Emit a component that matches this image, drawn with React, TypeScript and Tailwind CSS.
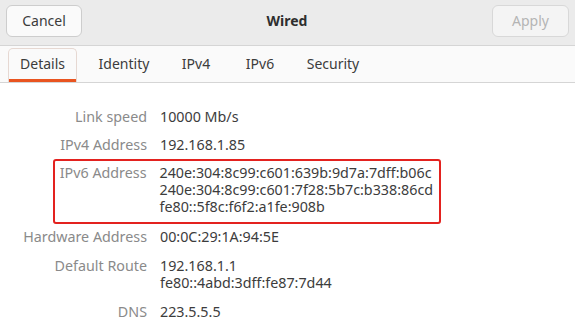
import React from 'react';

const tabs = [
  { name: 'Details', w: 'w-[69px]' },
  { name: 'Identity', w: 'w-[94px]' },
  { name: 'IPv4', w: 'w-[50px]' },
  { name: 'IPv6', w: 'w-[78px]' },
  { name: 'Security', w: 'w-[68px]' },
];

const Row: React.FC<{ label: string; values: string[]; className?: string }> = ({ label, values, className }) => (
  <div className={`flex items-start ${className ?? ''}`}>
    <div className="w-[160px] shrink-0 pr-[13px] text-right text-[#8a8a8a] leading-[17px] whitespace-nowrap">{label}</div>
    <div className="text-[#3c3c3c] leading-[17px] whitespace-nowrap">
      {values.map(v => (
        <div key={v}>{v}</div>
      ))}
    </div>
  </div>
);

export default function App() {
  return (
    <div className="w-[575px] h-[336px] overflow-hidden bg-white text-[14px]" style={{ fontFamily: '"Noto Sans", sans-serif' }}>
      {/* header bar */}
      <div className="h-[46px] bg-[#ebebeb] border-b border-[#d5d5d5] flex items-center justify-between px-[6px] pb-[4px]">
        <button className="w-[76px] h-[32px] rounded-[6px] border border-[#cdcdcd] bg-[#fafafa] text-[#3c3c3c]">Cancel</button>
        <div className="font-bold text-[#2e2e2e]">Wired</div>
        <button className="w-[77px] h-[32px] rounded-[6px] border border-[#d8d8d8] bg-[#f4f4f4] text-[#b4b4b4]">Apply</button>
      </div>

      {/* tabs */}
      <div className="h-[37px] bg-[#fafafa] border-b border-[#d5d5d5] flex items-end px-[8px]">
        {tabs.map((t, i) => (
          <div
            key={t.name}
            className={
              i === 0
                ? `${t.w} h-[34px] pb-[4px] flex items-center justify-center rounded-t-[5px] border border-b-0 border-[#e6d8d2] text-[#3c3c3c] shadow-[inset_0_-3px_0_#e95420]`
                : `${t.w} h-[34px] pb-[4px] flex items-center justify-center text-[#3c3c3c]`
            }
          >
            {t.name}
          </div>
        ))}
      </div>

      {/* details */}
      <div className="pt-[25px] text-[14.3px]">
        <Row label="Link speed" values={['10000 Mb/s']} />
        <Row label="IPv4 Address" values={['192.168.1.85']} className="mt-[11px]" />
        <div className="mt-[6px] ml-[53px] w-[388px] h-[65px] border-[2.5px] border-[#e3221f] rounded-[3px]">
          <div className="-ml-[55.5px] pt-[3px]">
            <Row
              label="IPv6 Address"
              values={['240e:304:8c99:c601:639b:9d7a:7dff:b06c', '240e:304:8c99:c601:7f28:5b7c:b338:86cd', 'fe80::5f8c:f6f2:a1fe:908b']}
            />
          </div>
        </div>
        <Row label="Hardware Address" values={['00:0C:29:1A:94:5E']} className="mt-[4px]" />
        <Row label="Default Route" values={['192.168.1.1', 'fe80::4abd:3dff:fe87:7d44']} className="mt-[12px]" />
        <Row label="DNS" values={['223.5.5.5']} className="mt-[12px]" />
      </div>
    </div>
  );
}
